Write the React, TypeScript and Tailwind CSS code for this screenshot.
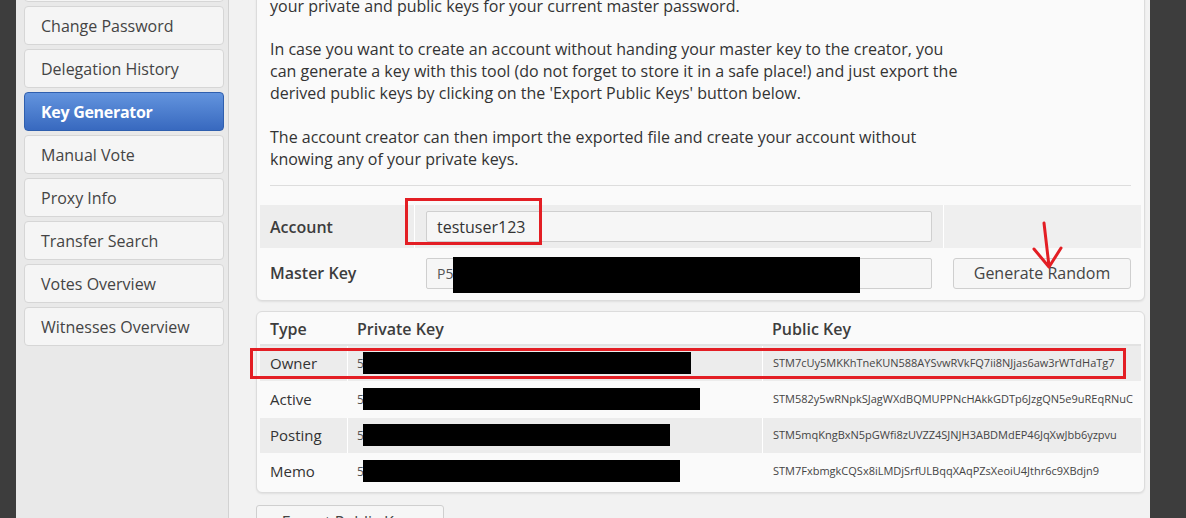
import React from 'react';

const navItems = [
  'Account Details',
  'Change Password',
  'Delegation History',
  'Key Generator',
  'Manual Vote',
  'Proxy Info',
  'Transfer Search',
  'Votes Overview',
  'Witnesses Overview',
];

const keyRows = [
  { type: 'Owner', redact: 328, pub: 'STM7cUy5MKKhTneKUN588AYSvwRVkFQ7ii8NJjas6aw3rWTdHaTg7' },
  { type: 'Active', redact: 337, pub: 'STM582y5wRNpkSJagWXdBQMUPPNcHAkkGDTp6JzgQN5e9uREqRNuC' },
  { type: 'Posting', redact: 307, pub: 'STM5mqKngBxN5pGWfi8zUVZZ4SJNJH3ABDMdEP46JqXwJbb6yzpvu' },
  { type: 'Memo', redact: 317, pub: 'STM7FxbmgkCQSx8iLMDjSrfULBqqXAqPZsXeoiU4Jthr6c9XBdjn9' },
];

const App: React.FC = () => {
  return (
    <div
      className="relative flex h-[518px] w-[1186px] overflow-hidden bg-[#3d3d3d] text-[#333]"
      style={{ fontFamily: '"Open Sans", "Noto Sans", sans-serif' }}
    >
      {/* left dark gutter */}
      <div className="w-[16px] shrink-0 bg-[#3d3d3d]"></div>

      {/* sidebar */}
      <aside className="w-[213px] shrink-0 border-r border-[#d2d2d2] bg-[#e9e9e9] pl-[8px]">
        <div className="-mt-[37px] flex w-[200px] flex-col gap-[4px]">
          {navItems.map((item) =>
            item === 'Key Generator' ? (
              <div
                key={item}
                className="flex h-[39px] items-center rounded-[4px] border border-[#2f5fae] bg-gradient-to-b from-[#6394de] to-[#3869bf] pl-[16px] text-[16px] font-bold tracking-[-0.3px] text-white"
              >
                {item}
              </div>
            ) : (
              <div
                key={item}
                className="flex h-[39px] items-center rounded-[4px] border border-[#d6d6d6] bg-[#f5f5f5] pl-[16px] text-[16px] text-[#444]"
              >
                {item}
              </div>
            )
          )}
        </div>
      </aside>

      {/* main */}
      <main className="w-[921px] shrink-0 bg-[#f2f2f2] pl-[27px] pr-[5px]">
        {/* intro + generator card */}
        <div className="-mt-[21px] rounded-[6px] border border-[#dcdcdc] bg-[#fafafa] px-[3px] pb-[3px] pt-[15px] shadow-[0_1px_2px_rgba(0,0,0,0.08)]">
          <div className="px-[10px] text-[16px] leading-[22px]">
            <p>your private and public keys for your current master password.</p>
            <p className="mt-[21px]">
              In case you want to create an account without handing your master key to the creator, you
              <br />
              can generate a key with this tool (do not forget to store it in a safe place!) and just export the
              <br />
              derived public keys by clicking on the 'Export Public Keys' button below.
            </p>
            <p className="mt-[22px]">
              The account creator can then import the exported file and create your account without
              <br />
              knowing any of your private keys.
            </p>
            <div className="mt-[15px] h-px bg-[#dddddd]"></div>
          </div>

          <div className="mt-[19px] flex flex-col gap-px">
            <div className="grid h-[43px] grid-cols-[154px_528px_1fr] gap-px bg-white">
              <div className="flex items-center bg-[#ededed] pl-[10px] text-[16px] font-semibold text-[#3d3d3d]">
                Account
              </div>
              <div className="flex items-center bg-[#ededed] px-[11px]">
                <div className="flex h-[31px] w-full items-center rounded-[2px] border border-[#cfcfcf] bg-[#f6f6f6] pl-[10px] text-[16px] text-[#333]">
                  testuser123
                </div>
              </div>
              <div className="bg-[#efefef]"></div>
            </div>
            <div className="grid h-[48px] grid-cols-[154px_528px_1fr] gap-px bg-[#fafafa]">
              <div className="flex items-center pl-[10px] text-[16px] font-semibold text-[#3d3d3d]">Master Key</div>
              <div className="relative flex items-center px-[11px]">
                <div className="flex h-[31px] w-full items-center rounded-[2px] border border-[#cfcfcf] bg-[#f6f6f6] pl-[10px] text-[14px] text-[#555]">
                  P5
                </div>
                <div className="absolute left-[38px] top-[8px] h-[36px] w-[407px] bg-black"></div>
              </div>
              <div className="flex items-center pl-[9px] pr-[10px]">
                <button className="h-[31px] w-full rounded-[3px] border border-[#cfcfcf] bg-[#f6f6f6] text-[16px] text-[#444]">
                  Generate Random
                </button>
              </div>
            </div>
          </div>
        </div>

        {/* keys card */}
        <div className="mt-[10px] rounded-[6px] border border-[#dcdcdc] bg-[#fafafa] px-[3px] pb-[3px] pt-[4px] shadow-[0_1px_2px_rgba(0,0,0,0.08)]">
          <div className="grid h-[30px] grid-cols-[87px_414px_1fr] border-b-2 border-[#e2e2e2] text-[16px] font-semibold text-[#3d3d3d]">
            <div className="pl-[10px] leading-[26px]">Type</div>
            <div className="pl-[10px] leading-[26px]">Private Key</div>
            <div className="pl-[11px] leading-[26px]">Public Key</div>
          </div>
          <div className="flex flex-col gap-px">
            {keyRows.map((row, i) => (
              <div
                key={row.type}
                className={`grid h-[35px] grid-cols-[87px_414px_1fr] gap-px ${i % 2 === 0 ? 'bg-white' : 'bg-[#fafafa]'}`}
              >
                <div className={`flex items-center pl-[10px] text-[15px] text-[#333] ${i % 2 === 0 ? 'bg-[#ececec]' : ''}`}>
                  {row.type}
                </div>
                <div className={`relative flex items-center pl-[9px] text-[12px] text-[#555] ${i % 2 === 0 ? 'bg-[#ececec]' : ''}`}>
                  5
                  <div
                    className="absolute left-[15px] top-[6px] h-[22px] bg-black"
                    style={{ width: row.redact }}
                  ></div>
                </div>
                <div className={`flex items-center pl-[10px] text-[11px] text-[#444] ${i % 2 === 0 ? 'bg-[#ececec]' : ''}`}>
                  {row.pub}
                </div>
              </div>
            ))}
          </div>
        </div>

        <button className="mt-[12px] h-[34px] w-[188px] rounded-[3px] border border-[#cfcfcf] bg-[#f6f6f6] text-[16px] text-[#444]">
          Export Public Keys
        </button>
      </main>

      {/* right dark gutter */}
      <div className="flex-1 bg-[#3d3d3d]"></div>

      {/* annotations */}
      <div className="pointer-events-none absolute left-[405px] top-[198px] h-[47px] w-[137px] border-[3px] border-[#e31e24]"></div>
      <div className="pointer-events-none absolute left-[250px] top-[348px] h-[31px] w-[876px] border-[3px] border-[#e31e24]"></div>
      <svg className="pointer-events-none absolute left-0 top-0" width="1186" height="518">
        <path
          d="M1044 223 L1049 266 M1034 249 L1049 267 L1061 248"
          stroke="#e31e24"
          strokeWidth="3"
          fill="none"
          strokeLinecap="round"
          strokeLinejoin="round"
        />
      </svg>
    </div>
  );
};

export default App;
